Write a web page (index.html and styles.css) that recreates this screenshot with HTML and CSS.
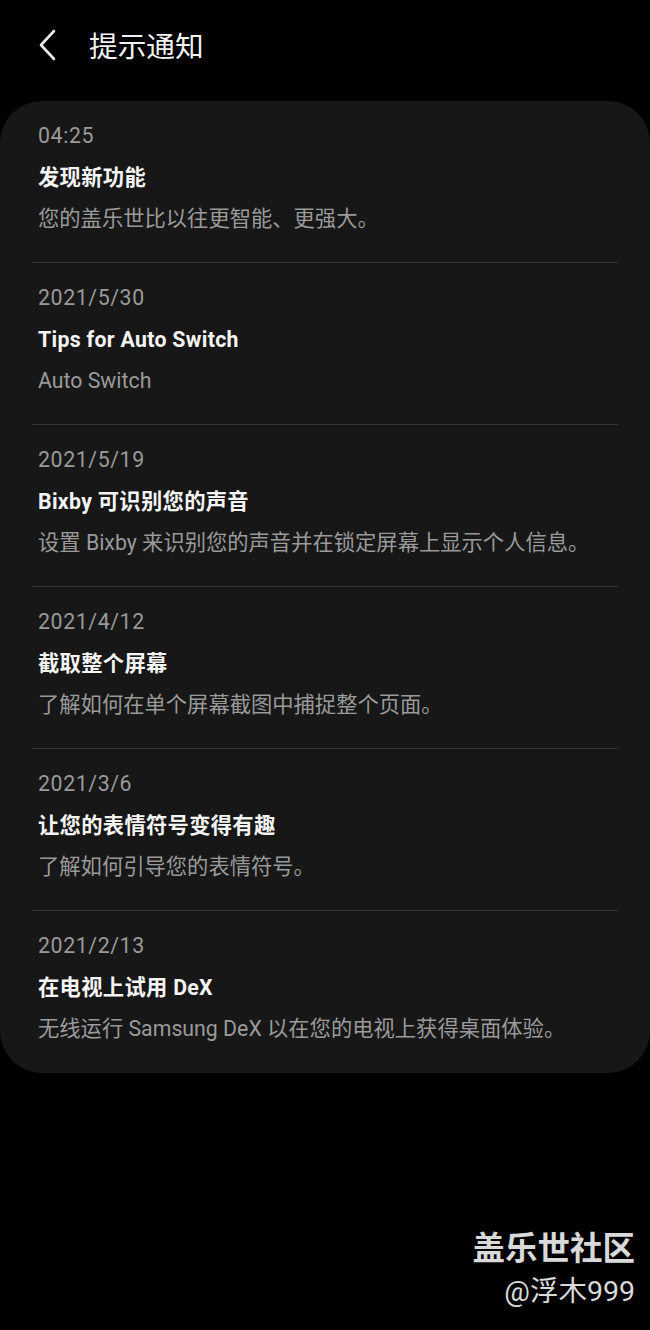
FILE: index.html
```html
<!DOCTYPE html>
<html lang="zh-CN">
<head>
<meta charset="utf-8">
<link rel="stylesheet" href="styles.css">
</head>
<body>
<div class="page">
  <header class="topbar">
    <svg class="back" width="20" height="32" viewBox="0 0 20 32"><path d="M16 2 L3 16 L16 30" fill="none" stroke="#e8e8e8" stroke-width="2.6" stroke-linecap="round" stroke-linejoin="round"/></svg>
    <h1 class="title">提示通知</h1>
  </header>
  <section class="card">
    <div class="item">
      <div class="date">04:25</div>
      <div class="head">发现新功能</div>
      <div class="desc">您的盖乐世比以往更智能、更强大。</div>
    </div>
    <div class="item">
      <div class="date">2021/5/30</div>
      <div class="head">Tips for Auto Switch</div>
      <div class="desc">Auto Switch</div>
    </div>
    <div class="item">
      <div class="date">2021/5/19</div>
      <div class="head">Bixby 可识别您的声音</div>
      <div class="desc">设置 Bixby 来识别您的声音并在锁定屏幕上显示个人信息。</div>
    </div>
    <div class="item">
      <div class="date">2021/4/12</div>
      <div class="head">截取整个屏幕</div>
      <div class="desc">了解如何在单个屏幕截图中捕捉整个页面。</div>
    </div>
    <div class="item">
      <div class="date">2021/3/6</div>
      <div class="head">让您的表情符号变得有趣</div>
      <div class="desc">了解如何引导您的表情符号。</div>
    </div>
    <div class="item">
      <div class="date">2021/2/13</div>
      <div class="head">在电视上试用 DeX</div>
      <div class="desc">无线运行 Samsung DeX 以在您的电视上获得桌面体验。</div>
    </div>
  </section>
  <div class="watermark">
    <div class="wm1">盖乐世社区</div>
    <div class="wm2">@浮木999</div>
  </div>
</div>
</body>
</html>
```
FILE: styles.css
```css
* { box-sizing: border-box; margin: 0; padding: 0; }
html, body { background: #000; }
body {
  width: 650px;
  height: 1330px;
  overflow: hidden;
  font-family: Roboto, "Noto Sans CJK SC", sans-serif;
  color: #fff;
}
.page {
  display: flex;
  flex-direction: column;
  height: 1330px;
}
.topbar {
  height: 101px;
  display: flex;
  align-items: flex-start;
  padding-top: 29px;
  padding-left: 38px;
}
.back { display: block; }
.title {
  margin-left: 31px;
  font-size: 28.7px;
  font-weight: 400;
  line-height: 32px;
  color: #f2f2f2;
  margin-top: 2px;
}
.card {
  background: #171717;
  border-radius: 42px;
  padding: 0 32px;
}
.item {
  padding: 20px 6px 29px;
  border-bottom: 1px solid #353535;
}
.item:last-child {
  border-bottom: none;
  padding-bottom: 30px;
}
.date {
  font-size: 21.3px;
  line-height: 28px;
  letter-spacing: 0.6px;
  color: #9a9a9a;
  transform: translateY(1px);
}
.head {
  margin-top: 15px;
  font-size: 21.3px;
  line-height: 28px;
  letter-spacing: 0.3px;
  font-weight: 700;
  color: #f4f4f4;
}
.desc {
  margin-top: 13px;
  font-size: 21.3px;
  line-height: 28px;
  letter-spacing: 0;
  color: #9a9a9a;
}
.watermark {
  margin-top: auto;
  padding: 0 15px 18px 0;
  display: flex;
  flex-direction: column;
  align-items: flex-end;
  color: #d9d9d9;
}
.wm1 {
  font-size: 32.5px;
  font-weight: 700;
  line-height: 40px;
}
.wm2 {
  font-size: 28.5px;
  line-height: 40px;
  margin-top: 3px;
}
```
